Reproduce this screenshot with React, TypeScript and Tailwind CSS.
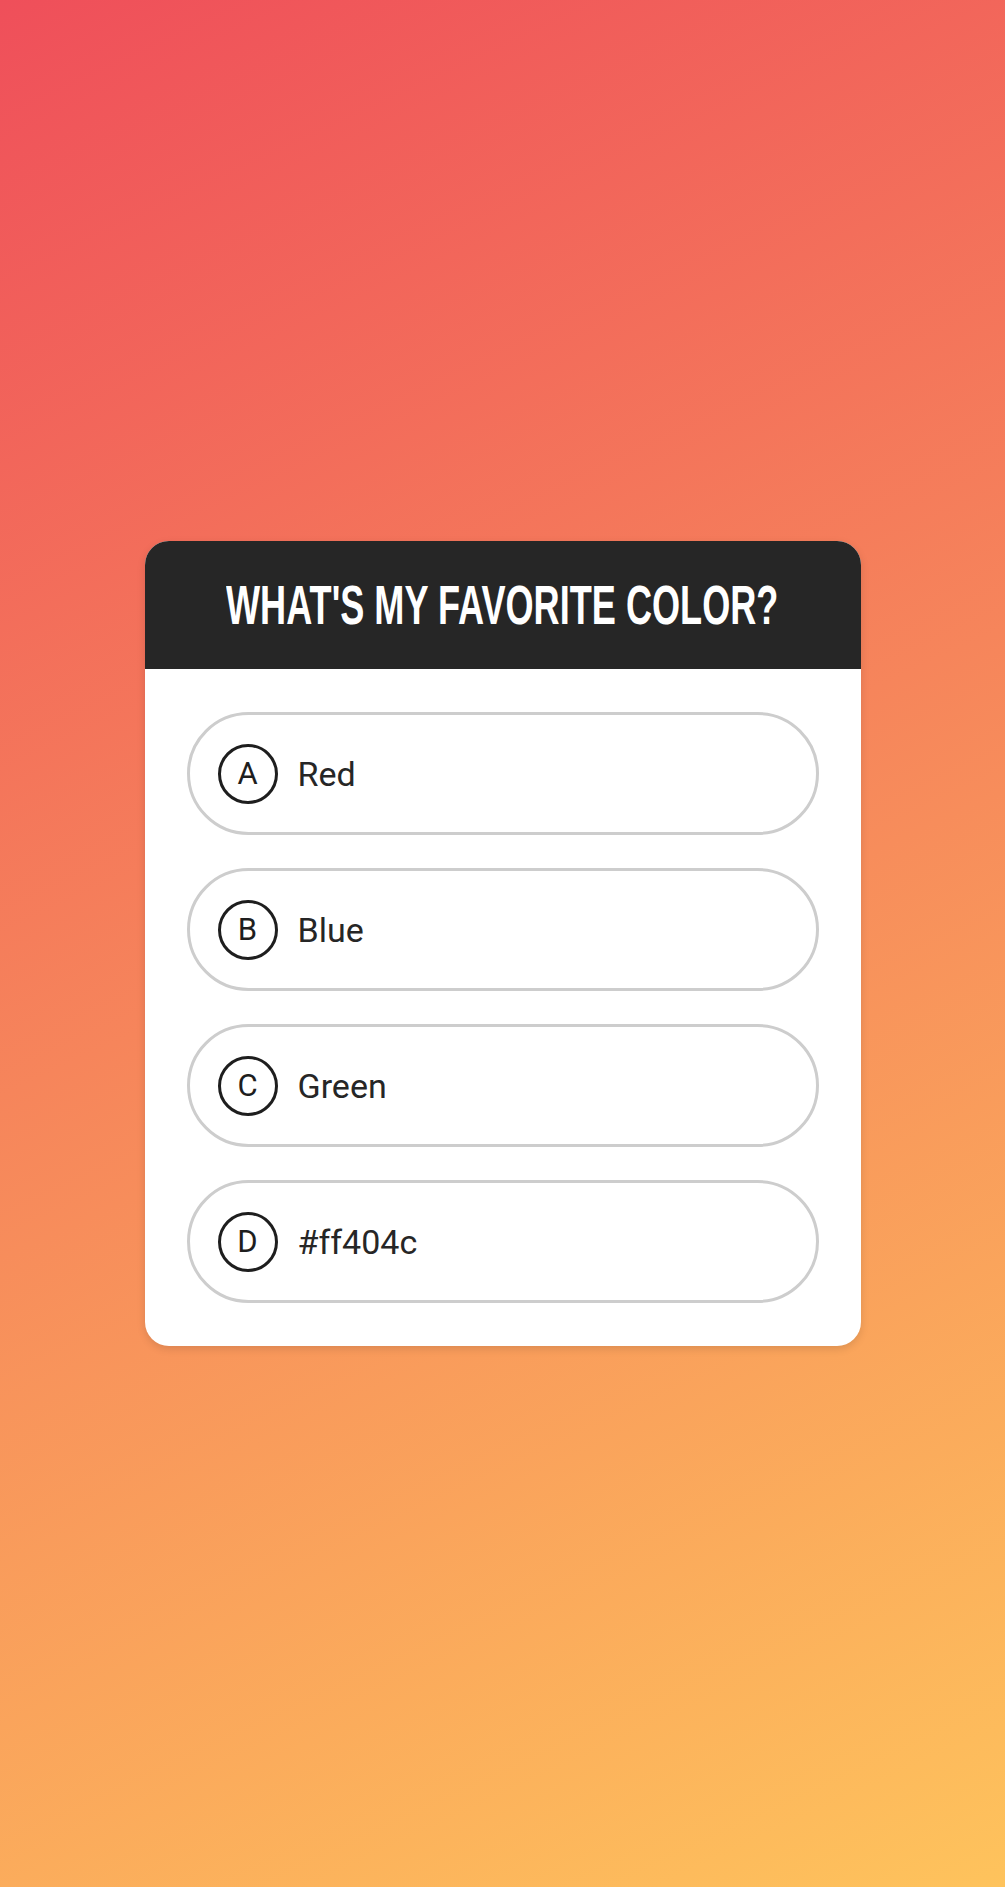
import React from "react";

const options = [
  { letter: "A", label: "Red" },
  { letter: "B", label: "Blue" },
  { letter: "C", label: "Green" },
  { letter: "D", label: "#ff404c" },
];

export default function App() {
  return (
    <div className="flex min-h-[1887px] w-full items-center justify-center bg-[linear-gradient(155deg,#ef4f5a_0%,#fec35c_100%)]">
      <div className="w-[716px] overflow-hidden rounded-[24px] bg-white shadow-[0_3px_8px_rgba(0,0,0,0.12)]">
        <div className="flex h-[128px] items-center justify-center bg-[#262626]">
          <span className="inline-block origin-center [transform:scaleX(0.645)] whitespace-nowrap font-['Liberation_Sans',sans-serif] text-[56px] font-bold leading-none text-white">
            WHAT'S MY FAVORITE COLOR?
          </span>
        </div>
        <div className="flex flex-col gap-[33px] px-[42px] pt-[43px] pb-[43px]">
          {options.map((o) => (
            <div
              key={o.letter}
              className="flex h-[123px] items-center rounded-full border-[3px] border-[#cdcdcd] pl-[28px]"
            >
              <div className="flex h-[60px] w-[60px] items-center justify-center rounded-full border-[3px] border-[#1e1e1e] font-['Roboto',sans-serif] text-[31px] font-normal leading-none text-[#1e1e1e]">
                {o.letter}
              </div>
              <span className="ml-[20px] font-['Roboto',sans-serif] text-[34px] leading-none text-[#262626]">
                {o.label}
              </span>
            </div>
          ))}
        </div>
      </div>
    </div>
  );
}
